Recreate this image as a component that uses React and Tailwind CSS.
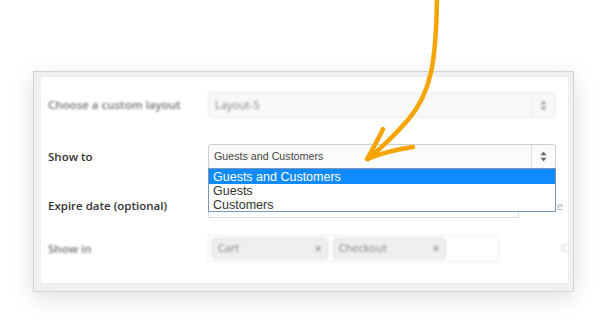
import React from "react";

const UpDown = ({ className }) => (
  <svg width="7" height="11" viewBox="0 0 7 11" className={className}>
    <path d="M3.5 0.5 L6.5 4.2 L0.5 4.2 Z" fill="currentColor" />
    <path d="M3.5 10.5 L6.5 6.8 L0.5 6.8 Z" fill="currentColor" />
  </svg>
);

const Tag = ({ label, width }) => (
  <div
    className={`flex items-center justify-between h-[21px] px-[5px] rounded-[3px] border border-[#d0d0d0] bg-[#eaeaea] ${width}`}
  >
    <span className="text-[11px] text-[#555]">{label}</span>
    <span className="text-[12px] font-bold text-[#777] leading-none">×</span>
  </div>
);

const App = () => {
  return (
    <div
      className="relative w-[600px] h-[331px] bg-white overflow-hidden pt-[71px] pl-[33px]"
      style={{ fontFamily: "'Open Sans', 'Liberation Sans', sans-serif" }}
    >
      <div className="w-[541px] h-[221px] border border-[#d3d3d3] bg-[#f0f0f0] pt-[5px] pl-[7px] pr-[5px] pb-[8px] shadow-[0_6px_22px_rgba(0,0,0,0.13)]">
        <div className="relative h-full bg-white pl-[7px] pt-[15px]">
          {/* row: custom layout (faded) */}
          <div className="flex items-center blur-[0.8px] opacity-75">
            <div className="w-[160px] text-[11.5px] font-semibold text-[#444]">
              Choose a custom layout
            </div>
            <div className="flex w-[348px] h-[26px] border border-[#e0e0e0] rounded-[3px] bg-[#f6f6f6]">
              <div className="flex-1 flex items-center pl-[6px] text-[11px] text-[#555]">
                Layout-5
              </div>
              <div className="w-[24px] border-l border-[#e4e4e4] flex items-center justify-center text-[#777]">
                <UpDown />
              </div>
            </div>
          </div>

          {/* row: show to */}
          <div className="flex items-center mt-[26px]">
            <div className="w-[160px] text-[11.5px] font-semibold text-[#333]">
              Show to
            </div>
            <div className="flex w-[348px] h-[25px] border border-[#cfcfcf] rounded-[3px] bg-[#fbfbfb]">
              <div
                className="flex-1 flex items-center pl-[5px] text-[10.7px] text-[#444]"
                style={{ fontFamily: "'Liberation Sans', Arial, sans-serif" }}
              >
                Guests and Customers
              </div>
              <div className="w-[24px] border-l border-[#e0e0e0] flex items-center justify-center text-[#666]">
                <UpDown />
              </div>
            </div>
          </div>

          {/* row: expire date */}
          <div className="flex items-center mt-[25px]">
            <div className="w-[160px] text-[11.5px] font-semibold text-[#333]">
              Expire date (optional)
            </div>
            <div className="w-[311px] h-[24px] border border-[#dcdcdc] bg-white" />
            <span className="ml-[20px] text-[11px] text-[#aaa]">Date</span>
          </div>

          {/* row: show in (faded) */}
          <div className="flex items-center mt-[17px] blur-[0.8px] opacity-75">
            <div className="w-[160px] text-[11.5px] font-semibold text-[#444]">
              Show in
            </div>
            <div className="flex items-center gap-[5px] w-[292px] h-[27px] border border-[#e4e4e4] px-[3px]">
              <Tag label="Cart" width="w-[116px]" />
              <Tag label="Checkout" width="w-[113px]" />
            </div>
            <span className="ml-[62px] text-[11px] text-[#bbb]">C</span>
          </div>

          {/* open dropdown list */}
          <div
            className="absolute left-[167px] top-[91px] w-[348px] h-[44px] border border-[#7c97b8] bg-white text-[12.5px] leading-[14px] text-[#333]"
            style={{ fontFamily: "'Liberation Sans', Arial, sans-serif" }}
          >
            <div className="h-[15px] bg-[#0f8bff] text-white pl-[4px] pt-[1px]">
              Guests and Customers
            </div>
            <div className="pl-[4px]">Guests</div>
            <div className="pl-[4px]">Customers</div>
          </div>
        </div>
      </div>

      {/* hand-drawn arrow */}
      <svg
        className="absolute left-0 top-0 pointer-events-none"
        width="600"
        height="331"
        viewBox="0 0 600 331"
      >
        <g
          fill="none"
          stroke="#f6a400"
          strokeWidth="4.5"
          strokeLinecap="round"
          strokeLinejoin="round"
        >
          <path d="M437 -2 C436 60 432 92 408 120 C392 138 380 149 368 159" />
          <path d="M383 129 C378 140 372 150 367 159 C382 153 398 149 413 147" />
        </g>
      </svg>
    </div>
  );
};

export default App;
